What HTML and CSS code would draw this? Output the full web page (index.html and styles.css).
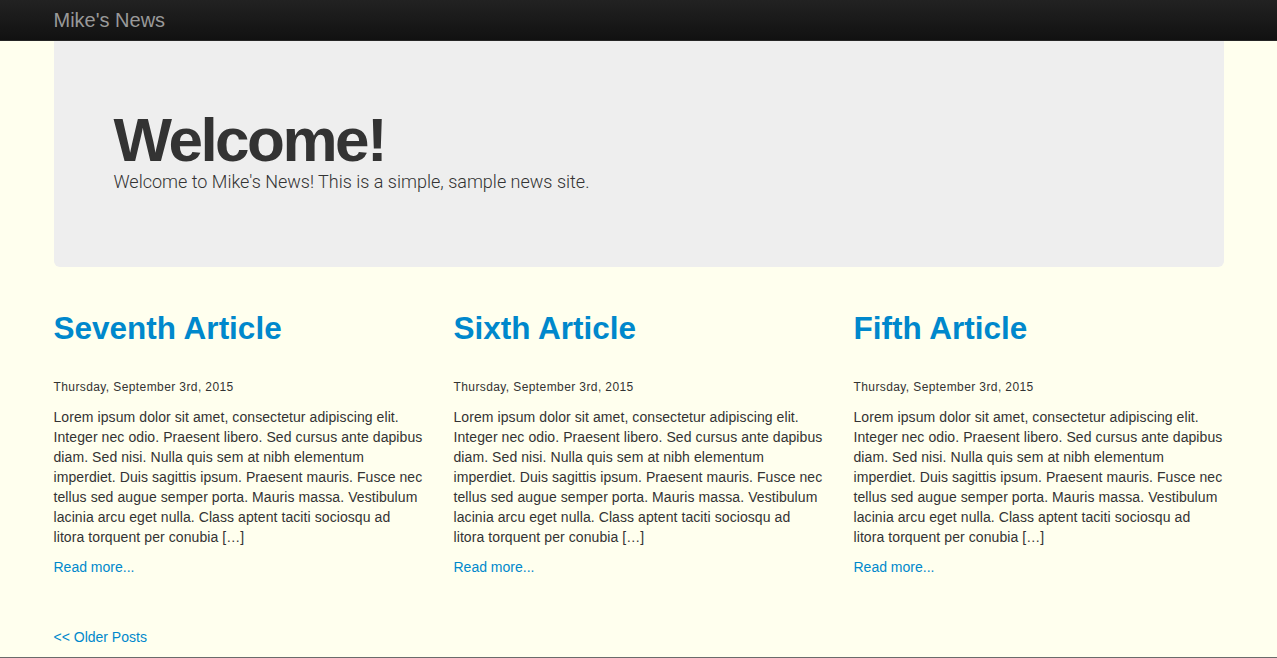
FILE: index.html
```html
<!DOCTYPE html>
<html lang="en">
<head>
<meta charset="utf-8">
<title>Mike's News</title>
<link rel="stylesheet" href="styles.css">
</head>
<body>
<div class="page">
  <header class="navbar">
    <div class="container">
      <a class="brand" href="#">Mike's News</a>
    </div>
  </header>
  <main class="container">
    <section class="hero">
      <h1>Welcome!</h1>
      <p>Welcome to Mike's News! This is a simple, sample news site.</p>
    </section>
    <div class="row">
      <article class="post">
        <h2><a href="#">Seventh Article</a></h2>
        <p class="date">Thursday, September 3rd, 2015</p>
        <p class="excerpt">Lorem ipsum dolor sit amet, consectetur adipiscing elit. Integer nec odio. Praesent libero. Sed cursus ante dapibus diam. Sed nisi. Nulla quis sem at nibh elementum imperdiet. Duis sagittis ipsum. Praesent mauris. Fusce nec tellus sed augue semper porta. Mauris massa. Vestibulum lacinia arcu eget nulla. Class aptent taciti sociosqu ad litora torquent per conubia […]</p>
        <p><a href="#">Read more...</a></p>
      </article>
      <article class="post">
        <h2><a href="#">Sixth Article</a></h2>
        <p class="date">Thursday, September 3rd, 2015</p>
        <p class="excerpt">Lorem ipsum dolor sit amet, consectetur adipiscing elit. Integer nec odio. Praesent libero. Sed cursus ante dapibus diam. Sed nisi. Nulla quis sem at nibh elementum imperdiet. Duis sagittis ipsum. Praesent mauris. Fusce nec tellus sed augue semper porta. Mauris massa. Vestibulum lacinia arcu eget nulla. Class aptent taciti sociosqu ad litora torquent per conubia […]</p>
        <p><a href="#">Read more...</a></p>
      </article>
      <article class="post">
        <h2><a href="#">Fifth Article</a></h2>
        <p class="date">Thursday, September 3rd, 2015</p>
        <p class="excerpt">Lorem ipsum dolor sit amet, consectetur adipiscing elit. Integer nec odio. Praesent libero. Sed cursus ante dapibus diam. Sed nisi. Nulla quis sem at nibh elementum imperdiet. Duis sagittis ipsum. Praesent mauris. Fusce nec tellus sed augue semper porta. Mauris massa. Vestibulum lacinia arcu eget nulla. Class aptent taciti sociosqu ad litora torquent per conubia […]</p>
        <p><a href="#">Read more...</a></p>
      </article>
    </div>
    <nav class="pager">
      <a href="#">&lt;&lt; Older Posts</a>
    </nav>
  </main>
</div>
</body>
</html>
```

FILE: styles.css
```css
html, body {
  margin: 0;
  padding: 0;
}
body {
  background: #ffffee;
  font-family: "Helvetica Neue", Helvetica, "Liberation Sans", Arial, sans-serif;
  font-size: 14px;
  line-height: 20px;
  color: #333;
}
.page {
  min-height: 100vh;
  box-sizing: border-box;
  border-bottom: 1px solid #6b6b6b;
}
a {
  color: #0088cc;
  text-decoration: none;
}
.container {
  width: 1170px;
  margin: 0 auto;
}
.navbar {
  height: 40px;
  background: linear-gradient(to bottom, #222222, #111111);
  border-bottom: 1px solid #252525;
}
.brand {
  display: block;
  font-size: 20px;
  font-weight: 200;
  line-height: 20px;
  padding: 10px 0;
  color: #999;
}
.hero {
  background: #eeeeee;
  border-radius: 0 0 6px 6px;
  padding: 66px 60px 60px;
  margin-bottom: 31px;
}
.hero h1 {
  margin: 6px 0 0;
  font-size: 62px;
  line-height: 54px;
  font-weight: bold;
  letter-spacing: -2.5px;
  color: #333;
}
.hero p {
  margin: 0 0 10px;
  font-family: Roboto, "Liberation Sans", sans-serif;
  font-size: 18px;
  line-height: 30px;
  font-weight: 300;
  color: #333;
}
.row {
  display: grid;
  grid-template-columns: repeat(3, 370px);
  column-gap: 30px;
}
.post h2 {
  margin: 10px 0 29px;
  font-size: 31.5px;
  line-height: 40px;
  font-weight: bold;
}
.post p {
  margin: 0 0 10px;
}
.post .date {
  font-size: 12px;
  letter-spacing: 0.4px;
}
.post .excerpt {
  letter-spacing: 0.08px;
}
.pager {
  margin-top: 40px;
  line-height: 20px;
}
```
